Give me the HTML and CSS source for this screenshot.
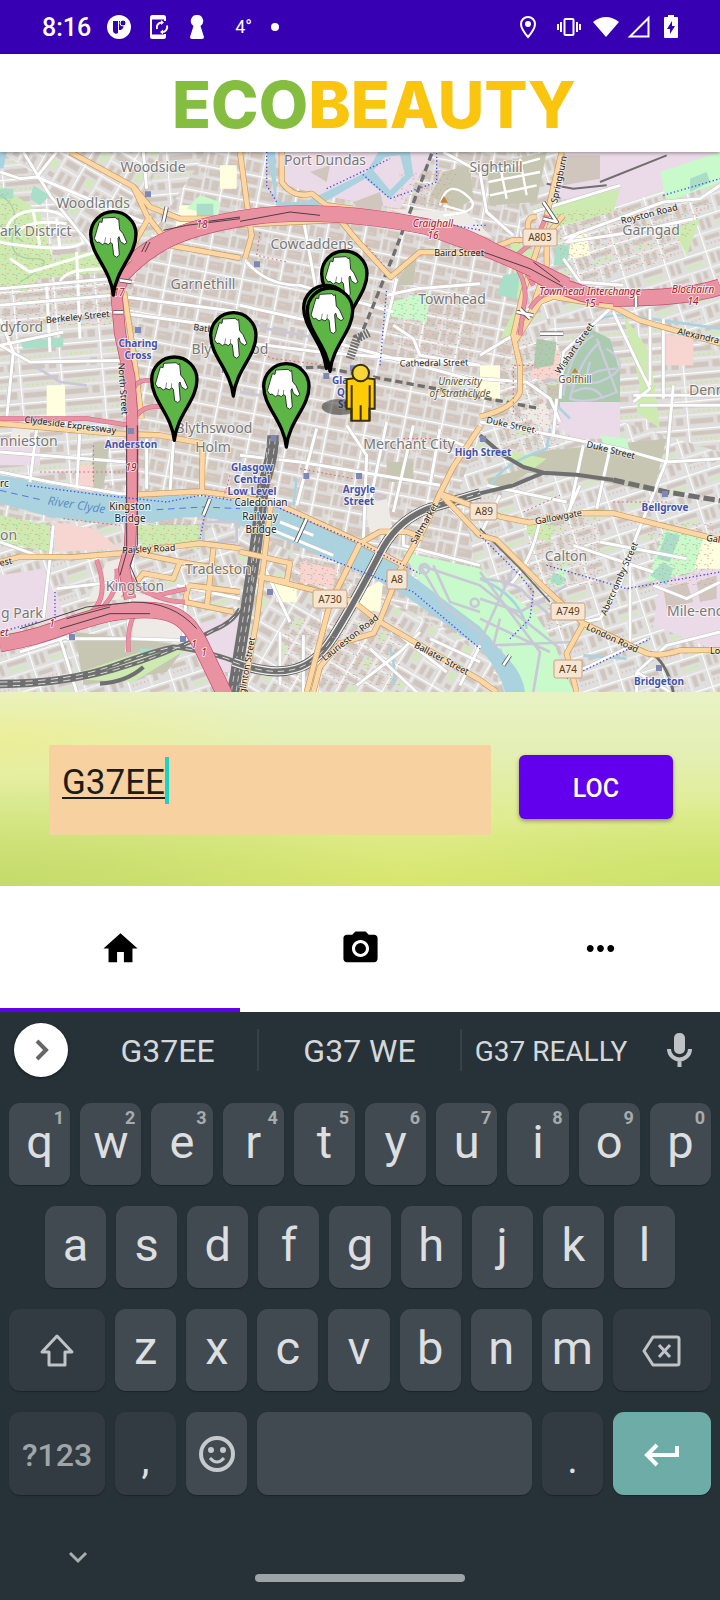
FILE: index.html
```html
<!DOCTYPE html>
<html lang="en">
<head>
<meta charset="utf-8">
<meta name="viewport" content="width=device-width, initial-scale=1">
<title>EcoBeauty</title>
<link rel="stylesheet" href="styles.css">
</head>
<body>
<div class="status">
  <div class="status-group">
    <span class="clock">8:16</span>
    <svg class="i24" viewBox="0 0 24 24" aria-hidden="true"><circle cx="12" cy="12" r="12" fill="#fff"/><path d="M6 6h5v12a3 3 0 0 1-5-2z" fill="#3700b3"/><path d="M12 6h2a5 5 0 0 1 0 9h-2z" fill="#3700b3"/><circle cx="16" cy="8" r="3" fill="#3700b3" stroke="#fff"/></svg>
    <svg class="i24 gap-a" viewBox="0 0 24 24" fill="none" stroke="#fff" stroke-width="2" aria-hidden="true"><path d="M18 6V2.500Q18 1 16.500 1H5.500Q4 1 4 2.500v19Q4 23 5.500 23h11q1.500 0 1.500-1.500V19"/><path d="M4 3h14M4 21h14" stroke-width="3"/><path d="M10 14a5 5 0 0 1 5-6.500M20 10.500a5 5 0 0 1-5 6.500"/><path d="M14 5l3 2.500-3 2.500zM16 14.500L13 17l3 2.500z" fill="#fff" stroke="none"/></svg>
    <svg class="i24 gap-b" viewBox="0 0 24 24" fill="#fff" aria-hidden="true"><path d="M12 0a6 6 0 0 1 3.500 11L19 22q0 2-2 2H7q-2 0-2-2L8.500 11A6 6 0 0 1 12 0z"/></svg>
    <span class="temp">4°</span>
    <svg class="dot" viewBox="0 0 8 8" aria-hidden="true"><circle cx="4" cy="4" r="4" fill="#fff"/></svg>
  </div>
  <div class="status-group right">
    <svg class="i24" viewBox="0 0 24 24" aria-hidden="true"><path d="M12 2a7 7 0 0 0-7 7c0 5 7 13 7 13s7-8 7-13a7 7 0 0 0-7-7z" fill="none" stroke="#fff" stroke-width="2"/><circle cx="12" cy="9" r="3" fill="#fff"/></svg>
    <svg class="i24 gap-c" viewBox="0 0 24 24" aria-hidden="true" fill="none" stroke="#fff" stroke-width="2"><rect x="7.500" y="4" width="9" height="16" rx="1"/><path d="M4 7v10M1 9v6M20 7v10M23 9v6"/></svg>
    <svg class="i26" viewBox="0 0 26 26" aria-hidden="true"><path d="M0 8Q13-2 26 8L13 23z" fill="#fff"/></svg>
    <svg class="i24" viewBox="0 0 24 24" aria-hidden="true"><path d="M21.500 3v18.500H3z" fill="none" stroke="#fff" stroke-width="2"/></svg>
    <svg class="i24" viewBox="0 0 24 24" aria-hidden="true"><path d="M9 0h6v2h3q1 0 1 1v19q0 1-1 1H6q-1 0-1-1V3q0-1 1-1h3z" fill="#fff"/><path d="M13 6l-5 8h3v5l5-8h-3z" fill="#3700b3"/></svg>
  </div>
</div>

<header class="brand"><h1 class="logo"><span class="eco">ECO</span><span class="beauty">BEAUTY</span></h1></header>

<main>
<section class="map" aria-label="Map of Glasgow">
<svg class="map-svg" viewBox="0 0 720 540" preserveAspectRatio="xMidYMid slice" role="img" aria-label="Glasgow">
<defs>
  <pattern id="city" width="112" height="78" patternUnits="userSpaceOnUse" patternTransform="rotate(11)"><rect width="112" height="78" fill="#dedcda"/><path d="M8 8h28v26H8zM42 8h20v14H42zM68 8h36v20H68zM8 44h44v26H8zM60 36h14v34H60zM82 40h22v30H82z" fill="#d0c6be"/><path d="M14 26h12M72 16h20M14 54h20M88 48v10" stroke="#e9cfc9" stroke-width="4" stroke-dasharray="4 3"/><path d="M0 0H112M0 0V78" stroke="#fff" stroke-width="8"/><path d="M56 0V78M56 34H112" stroke="#efeeee" stroke-width="3"/></pattern>
  <pattern id="west" width="124" height="84" patternUnits="userSpaceOnUse" patternTransform="rotate(-5)"><rect width="124" height="84" fill="#dfdedd"/><path d="M8 9h108v12H8zM8 54h70v16H8zM90 50h22v22H90z" fill="#d0c6be"/><path d="M20 32h80" stroke="#d3e8bd" stroke-width="6"/><path d="M20 32h90" stroke="#e4a59c" stroke-width="2" stroke-dasharray="3 12"/><path d="M0 0H124M0 0V84" stroke="#fff" stroke-width="7"/><path d="M0 43H124" stroke="#f3f2f2" stroke-width="4"/></pattern>
  <pattern id="diag" width="120" height="92" patternUnits="userSpaceOnUse" patternTransform="rotate(30)"><rect width="120" height="92" fill="#dfdedd"/><path d="M9 9h44v12H9zM9 28h14v50H9zM68 10h42v18H68zM68 50h14v32H68zM92 50h14v32H92zM36 66h18v14H36z" fill="#d0c6be"/><path d="M30 28h20v28H30z" fill="#d3e8bd"/><path d="M0 0H120M0 0V92" stroke="#fff" stroke-width="7"/><path d="M60 0V92M60 40H120" stroke="#f3f2f2" stroke-width="4"/></pattern>
  <pattern id="east" width="128" height="104" patternUnits="userSpaceOnUse" patternTransform="rotate(-18)"><rect width="128" height="104" fill="#dfdfde"/><path d="M10 10h12v32H10zM30 10h12v32H30zM56 10h60v12H56zM10 62h46v12H10zM78 58h14v34H78zM102 58h12v24h-12z" fill="#d0c6be"/><path d="M58 30h52v10H58z" fill="#d3e8bd"/><path d="M12 86h50" stroke="#e08d86" stroke-width="3" stroke-dasharray="3 9"/><path d="M0 0H128M0 0V104" stroke="#fff" stroke-width="7"/><path d="M0 52H128M68 52V104" stroke="#f3f2f2" stroke-width="4"/></pattern>
  <pattern id="trees" width="34" height="30" patternUnits="userSpaceOnUse"><path d="M5 6h4v3H5zM22 3h3v3h-3zM14 19h4v3h-4zM28 23h3v3h-3z" fill="#ea9085"/><path d="M13 8q6 3 4 6" fill="none" stroke="#a6d0a5" stroke-width="3"/></pattern>
  <g id="pin"><path d="M0 0C-8-78-68-120-68-182A68 68 0 0 1 68-182C68-120 8-78 0 0Z" fill="#5db546" stroke="#000" stroke-width="10" stroke-linejoin="round"/><path d="M-48-200l6-20 8 2 2-13 38-2 5 6 5-3 3 34 10 12 12 27-8 5-12-9-4-14-3 5 4 50-8 7-9-6-4-34-5-5-7 7-10-5-8 5-10-8-6 2-8-12z" fill="#fff" stroke="#2a392d" stroke-width="3"/><path d="M-26-157l3-16M-9-154l1-17" stroke="#555" stroke-width="2"/></g>
</defs>

<!-- Geometry is drawn on a grid three times finer than the labels -->
<svg x="0" y="0" width="720" height="540" viewBox="0 0 2160 1620">
  <rect width="2160" height="1620" fill="url(#city)"/>
  <path d="M0 0H620L420 300 360 620 380 1000H0Z" fill="url(#west)"/>
  <path d="M0 0H480L440 140 300 300 100 60Z" fill="url(#diag)"/>
  <path d="M0 1100L720 1130 1440 1480V1620H0Z" fill="url(#east)"/>
  <path d="M720 1120L1480 1520V1620H680Z" fill="url(#diag)"/>
  <path d="M1560 0H2160V1620H1500L1380 1000 1560 560Z" fill="url(#east)"/>
  <path d="M1640 500H1900L2160 600V900L1700 760Z" fill="url(#west)"/>
  <path d="M400 1320L560 1370 620 1480 400 1460ZM400 1210L390 1340 260 1350 320 1230ZM1090 1060L1160 1040 1180 1140 1110 1140ZM1160 170L1400 180 1480 260 1300 210ZM40 820H90V900H20ZM1560 780L1640 750 1660 850Z" fill="#eeebe6"/>
  <g fill="#ebdbe8">
    <path d="M820 0H1300L1200 170 960 130 860 100ZM1700 0H2160V50L1780 190 1640 110ZM0 860H120V940H0ZM0 1270L130 1250 200 1400 0 1440ZM600 1420L720 1380V1560H650ZM1650 800H1860V860H1720ZM1980 1290L2160 1240V1500L1960 1420ZM1620 730H1860V800H1660Z"/>
  </g>
  <path d="M1690 10H1800V80L1690 100ZM1990 1310L2060 1290 2080 1350 2000 1370ZM2090 1290L2150 1270V1340L2100 1350ZM930 60L990 40 980 90ZM1060 150L1140 120 1150 160 1080 190Z" fill="#d0c6be"/>
  <path d="M1460 40L1640 0 1610 150 1470 160ZM1330 60L1410 40 1420 140 1370 170 1290 130ZM1220 340L1250 320 1240 400 1190 400Z" fill="#c6c6b2"/>
  <path d="M1600 900L2000 860 1960 1020 1760 980 1560 960ZM1460 980L1620 940 1480 1030ZM225 1440L560 1480 500 1560 250 1600ZM280 870H330L310 1010H270ZM1640 700H1680V770H1640ZM1160 930H1240V990H1160Z" fill="#c6c6b2"/>
  <g fill="#ffffe0"><path d="M540 160H600V220H530ZM660 40H710V110H660ZM1700 250L1760 240 1770 310 1710 320ZM140 700H195V800H140ZM1080 1320L1150 1280 1140 1380 1070 1370ZM820 1290H890V1350H830ZM2080 1160H2160V1250H2060ZM1440 640H1500V740H1440Z"/></g>
  <path d="M1620 560L1680 600 1680 680 1590 680ZM1990 550H2080V640H1990ZM900 1230L1010 1250 1000 1310 900 1290ZM160 1110L280 1130 360 1190 170 1200ZM210 1040H280V940H230Z" fill="#f7d5d0"/>

  <g fill="#cdebb0">
    <path d="M0 100L120 180 160 330 80 420 0 400ZM30 310L100 350 190 310 320 290 320 360 120 380 0 400ZM400 1120H600V1190H430ZM0 1090L150 1120 150 1200 0 1170ZM1530 260L1600 300 1580 430 1550 440ZM1660 160L1860 110 1840 180 1650 230ZM1560 540L1500 560 1540 480ZM2020 230L2100 200 2060 310ZM1870 490L1950 600 1980 830 1910 780 1920 700ZM1500 890L1640 920 1600 950 1530 930ZM1580 1110L1660 1120 1650 1170 1580 1150ZM180 1580L420 1500 580 1480 400 1590Z"/>
  </g>
  <g fill="#c8facc">
    <path d="M1210 1200L1440 1250 1600 1380 1660 1470 1720 1620H1550L1500 1480 1260 1290ZM1980 60L2160 0V90L2000 150ZM1170 450L1290 420 1280 510 1150 490ZM1640 1290L1700 1240 1690 1310ZM2000 1110L2110 1160 2080 1260 1940 1290ZM1800 850L1880 860 1890 900 1820 890ZM600 130L660 150 650 190 560 170Z"/>
  </g>
  <g fill="#a9dfc9"><path d="M100 100L150 130 120 160 90 140ZM0 110H40V140H0ZM2000 1140L2040 1150 2010 1230 1970 1220ZM1990 1230L2020 1250 2000 1300 1950 1270ZM2070 80L2120 60 2130 90 2070 120ZM1670 280H1710L1700 340H1660ZM1510 370L1560 360 1550 440 1490 430ZM1660 1260L1700 1280 1680 1300 1650 1290ZM60 570L190 555 190 585 70 590ZM590 155H640V200H590ZM420 1490H470V1510H420Z"/></g>
  <path d="M1770 530L1830 560 1860 660V750H1670L1700 630ZM1610 560L1670 570 1660 640 1600 650Z" fill="#aacbaf"/>
  <g fill="url(#trees)">
    <path d="M0 90L200 330 420 290 400 520H0ZM400 1110H600V1200H430ZM0 1090L160 1120V1210L0 1180ZM1640 1330H1700V1440H1640ZM1650 180L2140 150 2000 330 1700 400ZM1130 420H1420V640H1190ZM1580 1080H1800V1300H1590ZM860 1400H1200V1600H820ZM1500 560H1680V900H1500ZM1200 60L1370 50 1360 180 1180 150ZM1940 1110H2140V1300H1960ZM860 1210H1060V1320H880Z"/>
  </g>
  <path d="M0 130Q60 160 40 240T100 320T60 390M0 220L70 270" fill="none" stroke="#a6d0a5" stroke-width="4"/>
  <g fill="none" stroke="#fff" stroke-width="9"><path d="M20 230Q40 170 130 175T250 270Q220 300 60 280T20 230M50 240Q90 200 200 215M100 180L120 280M170 200L180 290M30 320L90 360 320 290M180 390Q190 350 320 350M140 400L150 600M230 300L240 560"/></g>
  <g fill="none" stroke="#ccd" stroke-width="7"><path d="M1780 550Q1710 590 1690 730M1800 570Q1740 620 1710 740Q1760 760 1850 720L1790 560M1770 630Q1740 720 1820 680T1820 590M1750 680Q1790 650 1850 650M1720 720Q1780 690 1810 740"/></g>
  <g fill="none" stroke="#fff" stroke-width="7"><path d="M1320 160Q1340 80 1400 130T1330 190M1330 160L1400 180M1470 60L1620 20M1465 90L1620 60M1470 130L1610 100M1500 40L1520 140M1560 20L1580 130"/></g>

  <g fill="#aad3df">
    <path d="M0 970C130 990 260 1030 400 1030S680 1030 840 1069L1080 1174 1200 1244 1280 1304 1440 1424 1500 1494Q1570 1560 1575 1620H1515Q1500 1560 1440 1489L1320 1404 1220 1334 1120 1279 970 1214 820 1149 720 1119Q600 1080 500 1104T150 1094L0 1054Z"/>
    <path d="M800 0H825L830 150H915L1100 60 1135 0 1230 0 1240 70 1170 140 1095 80 930 175 830 165ZM1155 15L1120 55 1170 115 1215 70 1200 10ZM0 0H20L10 50H0Z" fill-rule="evenodd"/>
  </g>
  <g fill="none" stroke="#aad3df" stroke-width="8"><path d="M1470 1010Q1490 940 1640 890L1650 830M1800 500Q1850 480 1950 500L2160 530M1670 760L1710 800M1750 1510L1880 1520M1170 1490Q1190 1550 1180 1600M880 1060L890 980M1440 1280Q1560 1330 1580 1430"/></g>
  <path d="M0 1015L130 1045M470 1073L610 1065 720 1070" stroke="#5a72e8" stroke-width="3" stroke-dasharray="20 14" fill="none"/>

  <!-- Streets -->
  <g class="street-edge">
    <g id="streets">
      <path d="M70 0L150 130 270 280M0 60L60 80 110 75M110 75L430 210M0 410L330 380M0 460L340 430 720 480M340 480L640 520M0 580L190 540M0 580L90 630 400 625M0 500L40 600 20 800M430 0L440 110M170 0L110 75"/>
      <path d="M740 330Q800 400 900 400L1180 480M720 460L900 500 960 510M720 570L960 600 1440 640M910 200L960 480M1190 380L1150 560M1160 430L1250 410 1440 395M1180 520L1240 560 1260 610 1440 640M1000 570L1440 690M1330 0L1440 60 1460 180 1540 250M1600 180L1860 100M1690 260L1990 150 2100 140 2160 100M1690 320L1740 390 1870 400M1740 240L1700 270 1900 240 2080 200"/>
      <path d="M1680 740L1690 600 1830 470M1440 610L1540 550M1440 680L1580 690 1650 740 1680 810M1840 480L1920 650 1950 710 1900 750M1920 760H2160M1950 470V700M1990 500V740M2160 730H1900"/>
      <path d="M1440 810L1660 850 1860 890 2000 930 2160 920M2000 925L1910 1150 1860 1300 1800 1400 1750 1410M2000 925L2020 700M1660 850L1670 740M1750 880L1710 1070M1830 890L1790 1070M1740 1000L1700 1090M1460 1000L1700 1050M1500 1030L1440 1150M1620 1100Q1600 1220 1530 1300M1800 1170L2060 1220M1720 1180L1960 1260M1890 1240V1480M1910 1560L2000 1480 2160 1440M1910 1560L2010 1620M1910 1560V1620M1730 1560L1940 1460M1960 1300L2060 1340 2160 1290"/>
      <path d="M0 960L150 990 360 1025 600 1020M160 1120L150 1220 130 1400M0 1170L110 1210M170 1310L340 1290M200 1460H400L540 1465M180 1460L230 1620M60 1500L200 1455M0 900L380 930M110 830L90 990M240 830L230 1010M440 860V1010M520 870L510 1020M560 1310L550 1460M400 1200L380 1500M530 1300L720 1340"/>
      <path d="M720 910L900 930 1320 1000M1040 820L1100 910 1090 1170M950 830L890 1060M1160 810L1110 1050M840 1110L940 1150M1240 820L1180 1080M1320 830L1290 1000M1340 860L1440 900M1210 1100V1180L1440 1240M1320 1040L1440 1150M760 1110L1000 1210M790 1240L870 1410M840 1440V1600M910 1450V1620M970 1380L950 1620M1110 1490L1250 1620M1200 1450L1340 1560M1070 1600L1200 1500 1260 1440M1290 1460L1440 1530M1380 1600L1440 1480"/>
    </g>
  </g>
  <use href="#streets" class="street-fill"/>
  <g fill="none" stroke="#c9c8d6" stroke-width="8"><path d="M1260 1240L1440 1300 1680 1490M1260 1240L1330 1360 1440 1440M1300 1240L1350 1350 1440 1380M1440 1260L1620 1500 1600 1620M1440 1340L1560 1380 1700 1300M1540 1250L1440 1470M1440 1400L1650 1500M1500 1400L1480 1480 1720 1470M1440 1280Q1560 1290 1580 1330M1580 1330L1650 1390"/><circle cx="1273" cy="1250" r="14"/><circle cx="1424" cy="1352" r="12"/><path d="M610 1110H710V1170H610ZM1640 680L1720 700M100 640L180 690 260 700M720 500L800 530 960 560M720 720L900 750"/></g>

  <!-- Railways -->
  <g fill="none" stroke="#6f6f6f">
    <path d="M1440 850L1510 910 1570 945 1630 962M1440 1024L1540 1000 1630 962 1730 968 1840 984" stroke-width="12"/>
    <path d="M1840 984L2000 1020 2160 1046" stroke-width="15" stroke-dasharray="34 12"/>
    <path d="M1295 5L1230 180 1180 310 1120 460 1070 580M850 650L960 645 1440 735 1620 770" stroke-width="10" stroke-dasharray="22 12"/>
    <path d="M1950 1500Q2000 1530 2020 1620" stroke-width="9"/>
    <path d="M1820 100L1720 110 1640 95M1800 90L2000 10" stroke-width="6"/>
    <path d="M1440 1130L1560 1250 1650 1350" stroke-width="5"/>
    <path d="M0 1602Q180 1600 340 1555T640 1435Q700 1410 720 1370M0 1590Q200 1590 340 1540T520 1485Q640 1500 720 1535M300 1595Q380 1590 430 1545" stroke-width="13"/>
    <path d="M0 1602Q180 1600 340 1555T640 1435Q700 1410 720 1370M0 1590Q200 1590 340 1540T520 1485Q640 1500 720 1535" stroke="#ddd" stroke-width="3" stroke-dasharray="22 16"/>
    <path d="M820 850Q820 910 790 1000L765 1200 735 1400 700 1620" stroke-width="36"/>
    <path d="M800 870V1000M838 850L830 1000M780 1000L745 1400M812 830Q809 910 784 1000L759 1200 729 1400 694 1620M828 830Q825 910 798 1000L773 1200 743 1400 708 1620" stroke="#c7c7c7" stroke-width="3" stroke-dasharray="18 12"/>
    <path d="M1050 620L1070 560 1110 540" stroke-width="26" stroke-dasharray="5 4"/>
  </g>
  <path id="rail" class="rail-edge" d="M700 1530C860 1590 940 1550 1000 1454S1110 1260 1150 1185Q1200 1100 1290 1068L1440 1024"/>
  <path class="rail-light" d="M700 1530C860 1590 940 1550 1000 1454S1110 1260 1150 1185Q1200 1100 1290 1068L1440 1024"/>
  <path class="rail-core" d="M700 1530C860 1590 940 1550 1000 1454S1110 1260 1150 1185Q1200 1100 1290 1068L1440 1024"/>
  <path class="rail-mid" d="M700 1530C860 1590 940 1550 1000 1454S1110 1260 1150 1185Q1200 1100 1290 1068L1440 1024"/>

  <!-- Primary roads -->
  <g class="primary-edge">
    <g id="primary">
      <path d="M210 0L400 104 440 190 510 280 720 318M400 104L450 165 540 200 700 200M450 190L400 280 350 390 338 430M372 420L400 600 425 800"/>
      <path d="M845 0V90Q880 140 935 125L980 160 1060 170M720 0L740 150 755 250 735 320M560 225L720 218 1020 204 1070 264 1172 375 1260 300 1440 303 1540 264 1600 264"/>
      <path d="M1685 0L1630 234 1570 420 1540 550 1560 640 1560 720Q1540 770 1440 794M1690 190L1640 250 1640 340 1590 490 1550 560 1620 450 1660 434 1840 464 1920 505 2160 574M1590 260Q1570 190 1610 195"/>
      <path d="M0 815L330 844 480 850 608 874 606 1020M410 1028L600 1018 720 1034 840 1060 1080 1170 1210 1240M0 1230L60 1214 210 1216 360 1204 600 1174 720 1189"/>
      <path d="M420 1205L540 1230 520 1280 430 1264 370 1340M540 1230L720 1260M640 1190L620 1370M565 1300L720 1320M565 1300L555 1350 700 1380"/>
      <path d="M815 1039L770 1404 730 1620M720 1199L870 1234 860 1289 780 1274 940 1314 1060 1349 1130 1404 1440 1584 1490 1620M1080 1174L990 1354 920 1620M1080 1174L1140 1139 1220 1139 1270 1160M1440 824L1360 944 1320 1024 1280 1114 1200 1254 1140 1404 1120 1444 1020 1474 960 1544 940 1620"/>
      <path d="M1320 1024L1440 1150 1490 1164 1640 1314 1750 1414 1940 1504Q1980 1515 2040 1495L2160 1494M1750 1414L1700 1504 1730 1620M1320 1024L1500 1094 1590 1112 1740 1084 1840 1084 2000 1124 2160 1164"/>
    </g>
  </g>
  <use href="#primary" class="primary-fill"/>
  <path class="rail-light" d="M1000 1454C1060 1360 1110 1260 1150 1185Q1200 1100 1290 1068"/>
  <path class="rail-core" d="M1000 1454C1060 1360 1110 1260 1150 1185Q1200 1100 1290 1068"/>

  <!-- Motorways -->
  <g class="slip-edge"><g id="slips"><path d="M290 1224Q340 1360 240 1400M380 1250Q400 1320 470 1330L560 1310M410 1300Q480 1350 555 1350M350 1250Q360 1330 280 1390M385 1500Q380 1400 420 1370M390 760Q390 680 450 685M410 790Q440 750 520 770M0 800H260L390 820M1540 330Q1590 400 1570 470L1560 550M1550 310L1610 260 1640 190M1590 470Q1620 420 1690 400M1560 320L1600 400"/></g></g>
  <use href="#slips" class="slip-fill"/>
  <g class="motor-edge"><g id="m8"><path d="M2160 410Q1960 445 1840 439T1540 324 1280 224Q950 160 720 200T370 374L350 434 360 544 388 674 397 804 397 1000 390 1184 372 1250 390 1340"/></g></g>
  <g class="band-edge"><g id="bands"><path d="M1700 400Q1620 360 1540 324T1280 224Q950 160 720 200T400 330M1600 360Q1700 420 1800 436M0 1476C160 1450 200 1410 340 1382 520 1354 560 1400 600 1474L680 1640M2160 405Q2050 440 1840 439"/></g></g>
  <use href="#m8" class="motor-fill"/>
  <use href="#bands" class="band-fill"/>
  <g fill="none" stroke="#503d45" stroke-width="3"><path d="M60 1430L260 1365 400 1350Q520 1350 590 1430M180 1430L330 1385H450M200 1400L330 1365M380 820V1200L360 1270M412 820V1180L390 1240 420 1310M1450 300L1590 350 1700 410M1600 330L1680 390M490 235L560 220 720 200M610 210L720 195M720 208L870 180 960 190M425 300L440 270M435 300L450 270"/></g>

  <g fill="none" stroke="#4848e8" stroke-width="4" stroke-dasharray="4 7"><path d="M80 1000L310 1030 500 1050 600 1030 700 1045M840 1069L1080 1174 1260 1265M960 1210L1240 1320 1440 1490M800 0V100L830 150M980 110L1170 20M1080 60L1170 140 1310 90V0M1140 640L1160 410M1360 220L1440 234M1440 1150L1560 1270 1600 1320 1590 1400 1530 1460M1640 1240L1880 1310 2160 1260M165 1320V1400M0 1440L110 1410M1420 220H1460M1700 1580L1950 1460M600 1160L620 1060M1990 130L2160 80"/></g>
  <g fill="none" stroke="#d8646a" stroke-width="3" stroke-dasharray="5 8"><path d="M120 960H370M280 880V990M690 970L670 1040M780 240L770 310 860 330M720 580L820 620 980 640M900 950L1060 980M1600 640H1540V780L1620 850M1570 1080L1680 1030M1840 1050H2000M190 1100L360 1120M1100 280L1160 350M1210 860H1300"/></g>

  <!-- Footbridges -->
  <g class="bridge-edge"><g id="bridges"><path d="M630 1040L610 1090M1630 150L1670 210 1630 200M1560 470L1590 500M1550 480L1600 490M1620 545L1690 545M1908 430V465M920 1100L888 1170M490 210L500 165M360 385L395 390M340 481H370M1530 1510L1510 1540"/></g></g>
  <use href="#bridges" class="bridge-fill"/>

  <g fill="#7d88b5"><path d="M435 118h18v18h-18zM405 525h18v18h-18zM762 328h18v18h-18zM384 828h18v18h-18zM207 1446h18v18h-18zM540 1452h18v18h-18zM812 850h18v18h-18zM910 963h18v18h-18zM1068 963h18v18h-18zM801 1311h18v18h-18zM1440 852h18v18h-18zM1986 1017h18v18h-18zM1968 1539h18v18h-18zM970 663h18v18h-18zM1050 640h18v18h-18z"/></g>
  <path d="M1332 132l12 20h-24zM1725 648l10 14h-20z" fill="#c38333"/>
</svg>

<g class="area">
  <text x="153" y="20">Woodside</text><text x="93" y="56">Woodlands</text><text class="from-left" x="0" y="84">ark District</text><text x="203" y="137">Garnethill</text><text class="from-left" x="0" y="180">dyford</text><text x="325" y="13">Port Dundas</text><text x="312" y="97">Cowcaddens</text><text x="452" y="152">Townhead</text><text x="496" y="20">Sighthill</text><text x="651" y="83">Garngad</text><text class="from-left" x="689" y="243">Denn</text><text x="230" y="202">Blythswood</text><text x="231" y="221">Hill</text><text x="214" y="281">Blythswood</text><text x="213" y="300">Holm</text><text class="from-left" x="0" y="294">nnieston</text><text class="from-left" x="0" y="388">on</text><text x="218" y="422">Tradeston</text><text x="135" y="439">Kingston</text><text class="from-left" x="1" y="466">g Park</text><text x="409" y="297">Merchant City</text><text x="566" y="409">Calton</text><text class="from-left" x="667" y="464">Mile-enc</text>
</g>
<g class="station">
  <text x="138" y="195">Charing</text><text x="138" y="207">Cross</text><text x="131" y="296">Anderston</text><text x="252" y="319">Glasgow</text><text x="252" y="331">Central</text><text x="252" y="343">Low Level</text><text x="359" y="341">Argyle</text><text x="359" y="353">Street</text><text x="483" y="304">High Street</text><text x="665" y="359">Bellgrove</text><text x="659" y="533">Bridgeton</text><text class="from-left" x="332" y="232">Glasgow</text><text class="from-left" x="337" y="244">Queen</text><text class="from-left" x="338" y="256">Street</text>
</g>
<g class="place">
  <text x="130" y="358">Kingston</text><text x="130" y="370">Bridge</text><text x="261" y="354">Caledonian</text><text x="260" y="368">Railway</text><text x="261" y="381">Bridge</text><text class="from-left" x="0" y="335">rc</text>
</g>
<g class="road">
  <text transform="translate(78 168) rotate(-6)">Berkeley Street</text><text class="from-left" transform="translate(193 178) rotate(8)">Bath Street</text><text transform="translate(120 237) rotate(86)">North Street</text><text transform="translate(70 276) rotate(7)">Clydeside Expressway</text><text transform="translate(149 400) rotate(-3)">Paisley Road</text><text class="from-left" transform="translate(0 414) rotate(-10)">est</text><text transform="translate(459 104)">Baird Street</text><text transform="translate(434 214) rotate(-1)">Cathedral Street</text><text transform="translate(562 28) rotate(-78)">Springburn</text><text transform="translate(650 65) rotate(-14)">Royston Road</text><text transform="translate(577 198) rotate(-55)">Wishart Street</text><text class="from-left" transform="translate(677 182) rotate(13)">Alexandra</text><text transform="translate(510 276) rotate(12)">Duke Street</text><text transform="translate(610 301) rotate(14)">Duke Street</text><text transform="translate(559 368) rotate(-11)">Gallowgate</text><text class="from-left" transform="translate(706 389) rotate(7)">Gal</text><text transform="translate(622 428) rotate(-66)">Abercromby Street</text><text transform="translate(611 489) rotate(25)">London Road</text><text class="from-left" x="710" y="502">Lo</text><text transform="translate(427 373) rotate(-60)">Saltmarket</text><text transform="translate(352 488) rotate(-38)">Laurieston Road</text><text transform="translate(440 509) rotate(28)">Ballater Street</text><text transform="translate(250 514) rotate(-80)">glinton Street</text>
</g>
<g class="junction">
  <text x="202" y="76">18</text><text x="119" y="144">17</text><text x="433" y="75">Craighall</text><text x="433" y="87">16</text><text x="590" y="143">Townhead Interchange</text><text x="590" y="155">15</text><text x="693" y="141">Blochairn</text><text x="693" y="153">14</text><text x="131" y="319">19</text><text x="52" y="475">1</text><text x="194" y="496">1</text><text x="204" y="504">1</text><text class="from-left" x="0" y="484">et</text>
</g>
<text x="76" y="357" class="river" transform="rotate(9 76 357)">River Clyde</text>
<g class="poi"><text x="460" y="233">University</text><text x="460" y="245">of Strathclyde</text></g>
<text x="575" y="231" class="golf">Golfhill</text>
<g class="shield">
  <rect x="523" y="77" width="34" height="17" rx="2"/><rect x="470" y="351" width="27" height="17" rx="2"/><rect x="387" y="418" width="20" height="19" rx="2"/><rect x="313" y="438" width="34" height="18" rx="2"/><rect x="551" y="451" width="34" height="17" rx="2"/><rect x="554" y="508" width="28" height="18" rx="2"/>
  <text x="540" y="89">A803</text><text x="484" y="363">A89</text><text x="397" y="431">A8</text><text x="330" y="451">A730</text><text x="568" y="463">A749</text><text x="568" y="521">A74</text>
</g>

<svg x="0" y="0" width="720" height="540" viewBox="0 0 2160 1620">
  <use href="#pin" x="1033" y="547"/><use href="#pin" x="979" y="650"/><use href="#pin" x="990" y="658"/><use href="#pin" x="340" y="429"/><use href="#pin" x="700" y="732"/><use href="#pin" x="523" y="865"/><use href="#pin" x="859" y="885"/>
  <ellipse cx="1020" cy="765" rx="55" ry="24" fill="#222" opacity=".5"/>
  <g fill="#ffcc08" stroke="#3b3000" stroke-width="6"><path d="M1040 682q42-10 84 0v88h-16v36h-54v-36h-14z"/><path d="M1055 700v106M1109 700v106M1082 760v46" fill="none"/><circle cx="1082" cy="663" r="25" fill="#f6d73b"/></g>
</svg>
</svg>
</section>

<form class="search">
  <div class="field">
    <input class="postcode" type="text" value="G37EE" aria-label="Postcode">
    <span class="caret"></span>
  </div>
  <button class="loc" type="button">LOC</button>
</form>

<nav class="tabs" aria-label="Main">
  <button class="tab active" type="button" aria-label="Home"><svg class="tab-icon" viewBox="0 0 24 24"><path d="M10 20v-6h4v6h5v-8h3L12 3 2 12h3v8z"/></svg></button>
  <button class="tab" type="button" aria-label="Camera"><svg class="tab-icon" viewBox="0 0 24 24"><circle cx="12" cy="12" r="3.200"/><path d="M9 2L7.170 4H4c-1.100 0-2 .9-2 2v12c0 1.100.9 2 2 2h16c1.100 0 2-.9 2-2V6c0-1.100-.9-2-2-2h-3.170L15 2H9zm3 15c-2.760 0-5-2.240-5-5s2.240-5 5-5 5 2.240 5 5-2.240 5-5 5z"/></svg></button>
  <button class="tab" type="button" aria-label="More"><svg class="tab-icon" viewBox="0 0 24 24"><path d="M6 10c-1.100 0-2 .9-2 2s.9 2 2 2 2-.9 2-2-.9-2-2-2zm12 0c-1.100 0-2 .9-2 2s.9 2 2 2 2-.9 2-2-.9-2-2-2zm-6 0c-1.100 0-2 .9-2 2s.9 2 2 2 2-.9 2-2-.9-2-2-2z"/></svg></button>
</nav>
</main>

<section class="keyboard" aria-label="Keyboard">
  <div class="suggest">
    <button class="expand" type="button" aria-label="Expand toolbar"><svg width="54" height="54" viewBox="0 0 54 54"><path d="M23 18l9 9-9 9" fill="none" stroke="#666" stroke-width="4"/></svg></button>
    <button class="word first" type="button">G37EE</button>
    <button class="word" type="button">G37 WE</button>
    <button class="word long" type="button">G37 REALLY</button>
    <button class="mic" type="button" aria-label="Voice input"><svg width="40" height="40" viewBox="0 0 40 40"><rect x="14" y="3" width="11" height="21" rx="5" fill="#bfc3c6"/><path d="M9 19a10.500 10.500 0 0 0 21 0M19.500 29v8" fill="none" stroke="#bfc3c6" stroke-width="4"/></svg></button>
  </div>
  <div class="rows">
    <div class="row r1">
      <button class="key" type="button">q<span class="hint">1</span></button><button class="key" type="button">w<span class="hint">2</span></button><button class="key" type="button">e<span class="hint">3</span></button><button class="key" type="button">r<span class="hint">4</span></button><button class="key" type="button">t<span class="hint">5</span></button><button class="key" type="button">y<span class="hint">6</span></button><button class="key" type="button">u<span class="hint">7</span></button><button class="key" type="button">i<span class="hint">8</span></button><button class="key" type="button">o<span class="hint">9</span></button><button class="key" type="button">p<span class="hint">0</span></button>
    </div>
    <div class="row r2">
      <button class="key" type="button">a</button><button class="key" type="button">s</button><button class="key" type="button">d</button><button class="key" type="button">f</button><button class="key" type="button">g</button><button class="key" type="button">h</button><button class="key" type="button">j</button><button class="key" type="button">k</button><button class="key" type="button">l</button>
    </div>
    <div class="row r3">
      <button class="key dark icon" type="button" aria-label="Shift"><svg width="40" height="40" viewBox="0 0 40 40"><path d="M20 5L35 21H28V34H12V21H5Z" fill="none" stroke="#c0c4c6" stroke-width="3" stroke-linejoin="round"/></svg></button>
      <button class="key" type="button">z</button><button class="key" type="button">x</button><button class="key" type="button">c</button><button class="key" type="button">v</button><button class="key" type="button">b</button><button class="key" type="button">n</button><button class="key" type="button">m</button>
      <button class="key dark icon" type="button" aria-label="Backspace"><svg width="40" height="40" viewBox="0 0 40 40"><path d="M2 20L11 6H35Q37 6 37 8V32Q37 34 35 34H11ZM17 14L28 26M28 14L17 26" fill="none" stroke="#c0c4c6" stroke-width="3" stroke-linejoin="round"/></svg></button>
    </div>
    <div class="row r4">
      <button class="key dark sym" type="button">?123</button>
      <button class="key dark punct" type="button">,</button>
      <button class="key emoji" type="button" aria-label="Emoji"><svg width="40" height="40" viewBox="0 0 40 40"><circle cx="20" cy="20" r="16" fill="none" stroke="#c6cacc" stroke-width="4"/><circle cx="14" cy="16" r="3" fill="#c6cacc"/><circle cx="26" cy="16" r="3" fill="#c6cacc"/><path d="M13 24q7 8 14 0" fill="none" stroke="#c6cacc" stroke-width="3"/></svg></button>
      <button class="key" type="button" aria-label="Space"></button>
      <button class="key dark punct" type="button">.</button>
      <button class="key enter icon" type="button" aria-label="Enter"><svg width="40" height="40" viewBox="0 0 40 40"><path d="M35 11V20H6M15 10L5 20L15 30" fill="none" stroke="#fff" stroke-width="4"/></svg></button>
    </div>
  </div>
  <div class="system">
    <button class="hide" type="button" aria-label="Hide keyboard"><svg width="24" height="24" viewBox="0 0 24 24"><path d="M4 8l8 8 8-8" fill="none" stroke="#a9adaf" stroke-width="3"/></svg></button>
    <span class="pill"></span>
  </div>
</section>
</body>
</html>
```
FILE: styles.css
```css
* { box-sizing: border-box; }
body { margin: 0; background: #263238; font-family: Roboto, sans-serif; }
button { border: 0; padding: 0; font-family: inherit; background: none; }
svg { display: block; }

.status { display: flex; justify-content: space-between; align-items: center; height: 54px; padding: 0 37px 0 42px; background: #3700b3; color: #fff; }
.status-group { display: flex; align-items: center; }
.right { gap: 8px; }
.clock { margin-right: 16px; padding-top: 2px; font-size: 25px; font-weight: 500; line-height: 30px; }
.i24 { width: 24px; height: 24px; }
.i26 { width: 26px; height: 26px; margin-left: 4px; }
.gap-a { margin-left: 16px; }
.gap-b { margin-left: 14px; }
.gap-c { margin-left: 9px; }
.temp { margin-left: 26px; font-size: 18px; line-height: 24px; }
.dot { width: 8px; height: 8px; margin-left: 19px; }

.brand { position: relative; z-index: 1; display: flex; justify-content: center; align-items: center; height: 98px; padding: 4px 0 0 28px; background: #fff; box-shadow: 0 1px 4px rgba(0, 0, 0, .4); }
.logo { margin: 0; font-family: Inter, sans-serif; font-size: 64px; font-weight: 800; line-height: 80px; }
.eco { color: #85bd41; }
.beauty { color: #fac50f; }

.map { overflow: hidden; background: #e0dfdf; }
.map-svg { width: 100%; height: auto; }
.street-edge, .street-fill, .primary-edge, .primary-fill, .slip-edge, .slip-fill, .motor-edge, .motor-fill, .band-edge, .band-fill, .bridge-edge, .bridge-fill, .rail-edge, .rail-light, .rail-core, .rail-mid { fill: none; stroke-linejoin: round; }
.street-edge { stroke: #c4c2c2; stroke-width: 12px; }
.street-fill { stroke: #fff; stroke-width: 9px; }
.primary-edge { stroke: #c79a58; stroke-width: 18px; }
.primary-fill { stroke: #fcd6a4; stroke-width: 14px; }
.slip-edge { stroke: #d5688a; stroke-width: 14px; }
.slip-fill { stroke: #e892a2; stroke-width: 11px; }
.motor-edge { stroke: #c9466e; stroke-width: 36px; }
.motor-fill { stroke: #e892a2; stroke-width: 32px; }
.band-edge { stroke: #c9466e; stroke-width: 50px; }
.band-fill { stroke: #e892a2; stroke-width: 46px; }
.bridge-edge { stroke: #555; stroke-width: 13px; }
.bridge-fill { stroke: #fff; stroke-width: 8px; }
.rail-edge { stroke: #555; stroke-width: 30px; }
.rail-light { stroke: #eee; stroke-width: 25px; }
.rail-core { stroke: #707070; stroke-width: 17px; }
.rail-mid { stroke: #ddd; stroke-width: 3px; stroke-dasharray: 20 14; }

.map-svg text { font-family: "Noto Sans", sans-serif; text-anchor: middle; paint-order: stroke; stroke: rgba(255, 255, 255, .7); stroke-width: 2px; stroke-linejoin: round; }
.map-svg .from-left { text-anchor: start; }
.area text { font-size: 14px; fill: #777; }
.station text { font-size: 10px; font-weight: 700; fill: #4352ad; }
.place text { font-size: 10px; fill: #222; }
.road text { font-size: 9px; fill: #222; stroke: rgba(255, 255, 255, .4); }
.junction text { font-size: 10px; font-style: italic; fill: #a5182c; }
.map-svg .river { font-size: 12px; font-style: italic; fill: #5a8fc4; stroke: none; }
.poi text { font-size: 10px; font-style: italic; fill: #635b20; }
.map-svg .golf { font-size: 10px; fill: #665540; }
.shield rect { fill: #f6e5d2; stroke: #c9a27c; }
.shield text { font-size: 10px; fill: #5b3d16; stroke: none; }

.search { display: flex; align-items: center; gap: 28px; height: 194px; padding: 2px 47px 0 49px;
  background:
    radial-gradient(ellipse at 0 25%, rgba(240, 238, 130, .6), transparent 28%),
    radial-gradient(ellipse at 0 100%, rgba(190, 216, 108, .8), transparent 40%),
    radial-gradient(ellipse at 100% 100%, rgba(200, 225, 108, .8), transparent 32%),
    linear-gradient(#eaf2c4 0, #e4efb6 30%, #e0ed95 60%, #d9e66c 100%); }
.field { position: relative; flex: 1; }
.postcode { display: block; width: 100%; height: 90px; padding: 0 13px 16px; border: 0; border-radius: 2px; outline: 0; background: #f7d1a0; color: #1d1c18; font-family: Roboto, sans-serif; font-size: 35px; text-decoration: underline; text-decoration-thickness: 2px; text-underline-offset: 3px; }
.caret { position: absolute; left: 116px; top: 12px; width: 4px; height: 47px; background: #16d5c3; }
.loc { width: 154px; height: 64px; margin-bottom: 6px; padding-top: 2px; border-radius: 6px; background: #6200ee; color: #fff; font-size: 25px; font-weight: 500; box-shadow: 0 2px 4px rgba(0, 0, 0, .35); }

.tabs { display: grid; grid-template-columns: repeat(3, 1fr); height: 126px; background: #fff; }
.tab { display: flex; align-items: center; justify-content: center; border-bottom: 4px solid transparent; padding-top: 2px; }
.active { border-bottom-color: #6200ee; }
.tab-icon { width: 41px; height: 41px; }

.keyboard { background: #263238; color: #dcdee0; }
.suggest { display: grid; grid-template-columns: 54px 189fr 203fr 180fr 80px; align-items: center; height: 76px; padding-left: 14px; }
.suggest svg { margin: 0 auto; }
.expand { height: 54px; border-radius: 50%; background: #fff; box-shadow: 0 1px 3px rgba(0, 0, 0, .5); }
.word { height: 42px; padding-top: 3px; color: #d5d8da; font-size: 32px; line-height: 39px; }
.word + .word { border-left: 2px solid #364147; }
.first { padding-left: 10px; }
.long { font-size: 28px; }
.rows { display: grid; gap: 21px; padding: 15px 9px 0; }
.row { display: grid; gap: 10px; grid-auto-rows: 82px; }
.r1 { grid-template-columns: repeat(10, 1fr); }
.r2 { grid-template-columns: repeat(9, 1fr); padding: 0 36px; }
.r3 { grid-template-columns: 96fr repeat(7, 61fr) 98fr; }
.r4 { grid-template-columns: 96fr 61fr 61fr 275fr 61fr 98fr; grid-auto-rows: 83px; }
.key { position: relative; display: flex; align-items: center; justify-content: center; min-width: 0; padding-bottom: 4px; border-radius: 11px; background: #424a51; color: #dcdee0; font-size: 47px; line-height: 56px; box-shadow: 0 1px 1px #1b2429; }
.hint { position: absolute; right: 6px; top: 5px; font-size: 18px; font-weight: 700; line-height: 20px; color: #a7acaf; }
.dark { background: #313b41; }
.icon { padding: 2px 0 0; }
.emoji { padding: 0; }
.sym { padding: 2px 0 0; font-size: 32px; font-weight: 500; color: #a0a6a8; }
.punct { padding: 12px 0 0; font-size: 40px; }
.enter { background: #6eaca8; }
.system { display: grid; height: 105px; padding: 50px 0 18px; }
.hide { width: 24px; height: 24px; margin-left: 66px; }
.pill { justify-self: center; align-self: end; width: 210px; height: 8px; border-radius: 4px; background: #9ea4a6; }
```
